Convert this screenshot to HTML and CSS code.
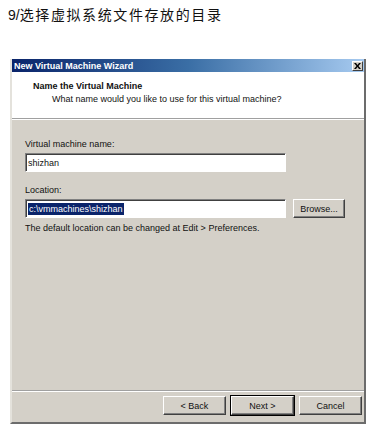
FILE: index.html
```html
<!DOCTYPE html>
<html lang="zh-CN">
<head>
  <meta charset="UTF-8">
  <meta name="viewport" content="width=device-width, initial-scale=1.0">
  <title>新建虚拟机向导</title>
  <link rel="stylesheet" href="styles.css">
</head>
<body>
  <h1 class="step-title"><span class="step-num">9/</span>选择虚拟系统文件存放的目录</h1>

  <div class="wizard">
    <div class="titlebar">
      <span>New Virtual Machine Wizard</span>
      <span class="close-btn">
        <svg width="7" height="6" viewBox="0 0 7 6"><path d="M0 0h2l1.5 2 1.5-2h2L4.5 3 7 6H5L3.5 4 2 6H0l2.5-3z" fill="#000"/></svg>
      </span>
    </div>

    <div class="wizard-head">
      <div class="head-title">Name the Virtual Machine</div>
      <div class="head-sub">What name would you like to use for this virtual machine?</div>
    </div>

    <div class="wizard-body">
      <label class="field-label">Virtual machine name:</label>
      <div class="textbox">shizhan</div>

      <label class="field-label loc">Location:</label>
      <div class="loc-row">
        <div class="textbox"><span class="selected">c:\vmmachines\shizhan</span></div>
        <button class="btn browse">Browse...</button>
      </div>
      <p class="hint">The default location can be changed at Edit &gt; Preferences.</p>
    </div>

    <div class="wizard-foot">
      <button class="btn">&lt; Back</button>
      <button class="btn default">Next &gt;</button>
      <button class="btn">Cancel</button>
    </div>
  </div>
</body>
</html>
```

FILE: styles.css
```css
body {
  margin: 0;
  background: #fff;
  font-family: 'Liberation Sans', Arial, sans-serif;
}

.step-title {
  margin: 0;
  padding: 5px 0 0 8px;
  height: 59px;
  box-sizing: border-box;
  font-family: 'Noto Sans CJK SC', sans-serif;
  font-weight: normal;
  font-size: 14px;
  line-height: 18px;
  letter-spacing: 1.6px;
  color: #111;
}

.step-num {
  font-family: 'Liberation Sans', sans-serif;
  letter-spacing: 0;
}

.wizard {
  margin-left: 10px;
  width: 356px;
  height: 365px;
  box-sizing: border-box;
  display: flex;
  flex-direction: column;
  background: #d4d0c8;
  border-left: 2px solid #e4e2dc;
  border-right: 2px solid #6c6c6c;
  border-bottom: 2px solid #6c6c6c;
  font-size: 9px;
  color: #111;
}

.titlebar {
  height: 13px;
  display: flex;
  align-items: center;
  justify-content: space-between;
  padding: 0 1px 0 2px;
  background: linear-gradient(to right, #0a246a, #3a6ea5 50%, #a6caf0);
  color: #fff;
  font-weight: bold;
  font-size: 9px;
}

.close-btn {
  width: 11px;
  height: 10px;
  display: flex;
  align-items: center;
  justify-content: center;
  background: #d4d0c8;
  border: 1px solid;
  border-color: #fff #404040 #404040 #fff;
  box-sizing: border-box;
}

.wizard-head {
  height: 47px;
  background: #fff;
  border-bottom: 1px solid #a0a0a0;
  box-shadow: 0 1px 0 #fff;
  padding: 9px 0 0 21px;
  box-sizing: border-box;
}

.head-title {
  font-weight: bold;
}

.head-sub {
  margin: 3px 0 0 19px;
}

.wizard-body {
  flex: 1;
  padding: 20px 0 0 13px;
}

.field-label {
  display: block;
  height: 11px;
  margin-bottom: 3px;
}

.field-label.loc {
  margin-top: 13px;
}

.textbox {
  width: 261px;
  height: 19px;
  box-sizing: border-box;
  background: #fff;
  border: 1px solid;
  border-color: #808080 #fff #fff #808080;
  box-shadow: inset 1px 1px 0 #404040;
  padding: 3px 0 0 2px;
  line-height: 12px;
}

.selected {
  background: #0a246a;
  color: #fff;
  padding: 1px 1px;
}

.loc-row {
  display: flex;
  gap: 7px;
}

.btn {
  width: 63px;
  height: 19px;
  padding: 0;
  background: #d4d0c8;
  border: 1px solid;
  border-color: #fff #404040 #404040 #fff;
  box-shadow: inset -1px -1px 0 #808080;
  font-family: inherit;
  font-size: 9px;
  color: #111;
}

.browse {
  width: 52px;
}

.btn.default {
  outline: 1px solid #000;
  outline-offset: 0;
}

.hint {
  margin: 5px 0 0;
}

.wizard-foot {
  height: 29px;
  display: flex;
  justify-content: flex-end;
  align-items: center;
  gap: 5px;
  padding: 0 2px 2px 0;
  border-top: 1px solid #a0a0a0;
  box-shadow: inset 0 1px 0 #fff;
}
```
